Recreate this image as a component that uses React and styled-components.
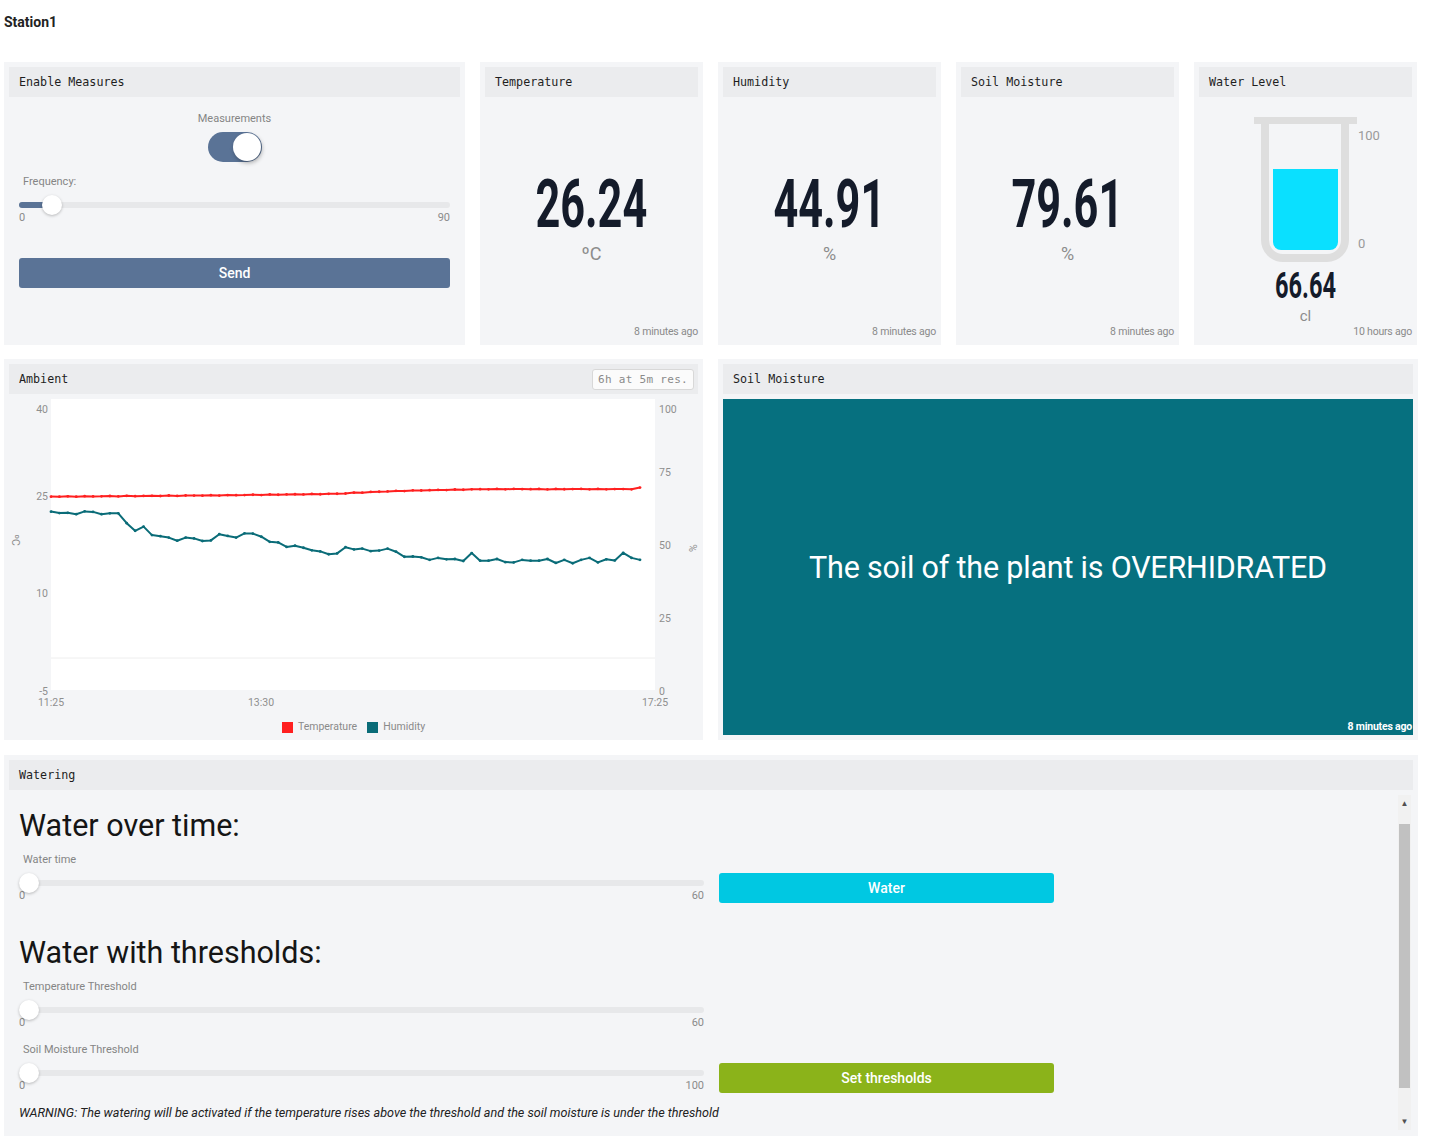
import React from "react";
import styled, { createGlobalStyle } from "styled-components";

const mono = `"DejaVu Sans Mono", "Liberation Mono", monospace`;

const GlobalStyle = createGlobalStyle`
  body {
    margin: 0;
    background: #fff;
    font-family: Roboto, "Noto Sans", sans-serif;
    color: #1c1c1c;
  }
`;

const Page = styled.div`
  width: 1414px;
  padding: 0 11px 0 4px;
`;

const Title = styled.div`
  padding-top: 14px;
  height: 16px;
  line-height: 16px;
  font-size: 14px;
  font-weight: 700;
  color: #222;
  margin-bottom: 32px;
`;

const Row = styled.div`
  display: grid;
  grid-template-columns: ${(p) => p.$cols};
  gap: 15px;
  height: ${(p) => p.$height}px;
  margin-bottom: 15px;
`;

const Card = styled.div`
  background: #f4f5f7;
  padding: 5px;
  display: flex;
  flex-direction: column;
  box-sizing: border-box;
  min-width: 0;
`;

const CardHeader = styled.div`
  height: 30px;
  flex-shrink: 0;
  background: #ebecee;
  padding: 0 4px 0 10px;
  display: flex;
  align-items: center;
  justify-content: space-between;
  font-family: ${mono};
  font-size: 11.7px;
  color: #1e1e1e;
`;

const ResButton = styled.div`
  height: 19px;
  line-height: 19px;
  padding: 0 5px;
  border: 1px solid #d8d8d8;
  border-radius: 3px;
  background: #fbfbfb;
  font-family: ${mono};
  font-size: 11px;
  color: #8a8a8a;
  letter-spacing: 0.3px;
`;

const Body = styled.div`
  flex: 1;
  display: flex;
  flex-direction: column;
  position: relative;
  min-height: 0;
`;

/* ---------- enable measures ---------- */

const ControlBody = styled(Body)`
  padding: 0 10px;
`;

const SmallLabel = styled.div`
  font-size: 11px;
  line-height: 14px;
  color: #858585;
  margin-top: ${(p) => p.$top || 0}px;
  padding-left: ${(p) => (p.$center ? 0 : 4)}px;
  text-align: ${(p) => (p.$center ? "center" : "left")};
`;

const Toggle = styled.div`
  align-self: center;
  width: 54px;
  height: 30px;
  margin-top: 6px;
  border-radius: 15px;
  background: #5a7396;
  position: relative;
`;

const ToggleThumb = styled.div`
  position: absolute;
  right: 1px;
  top: 1px;
  width: 28px;
  height: 28px;
  border-radius: 50%;
  background: #fff;
  box-shadow: 1px 2px 4px rgba(0, 0, 0, 0.3);
`;

const SliderWrap = styled.div`
  height: 12px;
  margin-top: ${(p) => p.$top}px;
  position: relative;
  display: flex;
  align-items: center;
`;

const SliderTrack = styled.div`
  width: 100%;
  height: 6px;
  border-radius: 3px;
  background: #e7e8ea;
  position: relative;
  overflow: hidden;
`;

const SliderFill = styled.div`
  position: absolute;
  left: 0;
  top: 0;
  bottom: 0;
  background: #5a7396;
`;

const SliderThumb = styled.div`
  position: absolute;
  top: -4px;
  width: 20px;
  height: 20px;
  border-radius: 50%;
  background: #fff;
  box-shadow: 0 1px 3px rgba(0, 0, 0, 0.25);
`;

const Ticks = styled.div`
  display: flex;
  justify-content: space-between;
  font-size: 11px;
  line-height: 14px;
  color: #8b8b8b;
`;

const ActionButton = styled.div`
  height: 30px;
  line-height: 30px;
  border-radius: 3px;
  background: ${(p) => p.$bg};
  color: #fff;
  text-align: center;
  font-size: 14px;
  font-weight: 500;
  margin-top: ${(p) => p.$top || 0}px;
`;

const Slider = ({ top, left = 0, fill }) => (
  <SliderWrap $top={top}>
    <SliderTrack>{fill ? <SliderFill style={{ width: fill }} /> : null}</SliderTrack>
    <SliderThumb style={{ left }} />
  </SliderWrap>
);

/* ---------- value cards ---------- */

const BigNumber = styled.div`
  font-family: Roboto, sans-serif;
  font-weight: 700;
  font-size: ${(p) => p.$size}px;
  line-height: ${(p) => p.$size}px;
  color: #141b2a;
  margin-top: ${(p) => p.$top}px;
  transform: scaleX(0.655);
  transform-origin: center;
`;

const Unit = styled.div`
  font-size: ${(p) => p.$size}px;
  line-height: ${(p) => p.$size + 2}px;
  color: #8c8c8c;
  margin-top: ${(p) => p.$top}px;
`;

const ValueBody = styled(Body)`
  align-items: center;
`;

const Footer = styled.div`
  margin-top: auto;
  margin-bottom: 1px;
  align-self: flex-end;
  font-size: 10.5px;
  line-height: 14px;
  letter-spacing: -0.2px;
  color: #8a8a8a;
`;

const Tube = styled.svg`
  margin-top: 17px;
  overflow: visible;
`;

/* ---------- chart ---------- */

const ChartSvg = styled.svg`
  margin-top: 2px;
  overflow: visible;
`;

const Legend = styled.div`
  display: flex;
  justify-content: center;
  gap: 10px;
  margin-top: 8px;
  font-size: 10.5px;
  line-height: 14px;
  color: #8a8a8a;
`;

const LegendItem = styled.div`
  display: flex;
  align-items: center;
  gap: 5px;
`;

const Swatch = styled.span`
  width: 11px;
  height: 11px;
  background: ${(p) => p.$color};
`;

/* ---------- soil message ---------- */

const Alert = styled.div`
  flex: 1;
  margin-top: 5px;
  background: #06707f;
  display: flex;
  align-items: center;
  justify-content: center;
  position: relative;
`;

const AlertText = styled.div`
  font-size: 30.5px;
  color: #fff;
  letter-spacing: -0.2px;
`;

const AlertAgo = styled.div`
  position: absolute;
  right: 1px;
  bottom: 1px;
  font-size: 10.5px;
  line-height: 14px;
  font-weight: 700;
  color: #fff;
  letter-spacing: -0.2px;
`;

/* ---------- watering ---------- */

const WaterBody = styled(Body)`
  flex-direction: row;
  padding-top: 5px;
`;

const WaterContent = styled.div`
  flex: 1;
  padding-left: 10px;
  padding-top: 13px;
`;

const Heading = styled.div`
  font-size: 30.5px;
  line-height: 36px;
  color: #151515;
  margin-top: ${(p) => p.$top}px;
`;

const SliderRow = styled.div`
  display: grid;
  grid-template-columns: 685px 335px;
  gap: 15px;
  align-items: end;
`;

const SliderBlock = styled.div`
  display: flex;
  flex-direction: column;
`;

const Warning = styled.div`
  margin-top: 12px;
  font-size: 12.6px;
  line-height: 16px;
  font-style: italic;
  color: #222;
`;

const Scrollbar = styled.div`
  width: 13px;
  margin-right: 2px;
  margin-bottom: 1px;
  background: #f1f1f1;
  display: flex;
  flex-direction: column;
  align-items: center;
`;

const Arrow = styled.div`
  height: 17px;
  display: flex;
  align-items: center;
  justify-content: center;
  font-size: 8px;
  color: #505050;
  margin-top: ${(p) => (p.$bottom ? "auto" : "0")};
`;

const ScrollThumb = styled.div`
  width: 11px;
  margin: 12px 0 0;
  height: 264px;
  background: #c1c1c1;
`;

/* ---------- data ---------- */

const humidity = [
  63.6, 63.1, 63.2, 62.7, 63.7, 63.5, 62.7, 63.0, 63.0, 59.5, 56.8, 58.3, 55.3,
  54.9, 54.4, 53.3, 54.4, 54.1, 53.2, 53.4, 55.6, 55.0, 54.4, 55.9, 55.8, 54.7,
  52.9, 52.7, 51.1, 51.5, 50.8, 49.9, 49.5, 48.5, 48.8, 51.0, 50.2, 50.5, 49.6,
  49.8, 50.5, 49.4, 47.6, 47.7, 47.4, 46.5, 47.2, 46.7, 46.8, 46.1, 48.9, 46.2,
  46.2, 46.8, 45.7, 45.6, 46.5, 46.2, 46.2, 46.8, 45.4, 46.5, 45.3, 46.5, 47.2,
  45.6, 46.7, 46.3, 49.0, 47.2, 46.5,
];

const tempAnchors = [
  [0, 26.0], [20, 26.2], [34, 26.45], [36, 26.6], [40, 26.85], [44, 27.0],
  [52, 27.2], [69, 27.2], [70, 27.4],
];

const temperature = humidity.map((_, i) => {
  let k = 0;
  while (k < tempAnchors.length - 2 && tempAnchors[k + 1][0] < i) k++;
  const [x0, y0] = tempAnchors[k];
  const [x1, y1] = tempAnchors[k + 1];
  const t = Math.min(1, Math.max(0, (i - x0) / (x1 - x0)));
  return y0 + (y1 - y0) * t + Math.sin(i * 3.7) * 0.04;
});

const px = (i) => 42 + (i * 589) / (humidity.length - 1);
const humY = (v) => 295 - v * 2.82;
const tempY = (v) => 295 - (v + 5) * 6.27;

const Series = ({ values, toY, color }) => {
  const pts = values.map((v, i) => `${px(i).toFixed(1)},${toY(v).toFixed(1)}`);
  return (
    <g>
      <polyline points={pts.join(" ")} fill="none" stroke={color} strokeWidth="2" strokeLinejoin="round" />
      {values.map((v, i) => (
        <circle key={i} cx={px(i)} cy={toY(v)} r="1.4" fill={color} />
      ))}
    </g>
  );
};

const axisText = { fontFamily: "Roboto, sans-serif", fontSize: 10.5, fill: "#8f8f8f" };

const AmbientChart = () => (
  <ChartSvg width="689" height="316">
    <rect x="42" y="3" width="604" height="291" fill="#fff" />
    <line x1="42" x2="646" y1="262" y2="262" stroke="#eeeeee" />
    {[["40", 17], ["25", 104], ["10", 201], ["-5", 299]].map(([t, y]) => (
      <text key={t} x="39" y={y} textAnchor="end" style={axisText}>{t}</text>
    ))}
    {[["100", 17], ["75", 80], ["50", 153], ["25", 226], ["0", 299]].map(([t, y]) => (
      <text key={t} x="650" y={y} style={axisText}>{t}</text>
    ))}
    {[["11:25", 42], ["13:30", 252], ["17:25", 646]].map(([t, x]) => (
      <text key={t} x={x} y="310" textAnchor="middle" style={axisText}>{t}</text>
    ))}
    <text transform="translate(3 144) rotate(90)" textAnchor="middle" style={axisText}>ºC</text>
    <text transform="translate(680 152) rotate(90)" textAnchor="middle" style={axisText}>%</text>
    <Series values={temperature} toY={tempY} color="#ff2020" />
    <Series values={humidity} toY={humY} color="#0a6c78" />
  </ChartSvg>
);

const ValueCard = ({ title, value, unit, ago }) => (
  <Card>
    <CardHeader>{title}</CardHeader>
    <ValueBody>
      <BigNumber $size={66} $top={75}>{value}</BigNumber>
      <Unit $size={18} $top={6}>{unit}</Unit>
      <Footer>{ago}</Footer>
    </ValueBody>
  </Card>
);

const gaugeText = { fontFamily: "Roboto, sans-serif", fontSize: 13, fill: "#9a9a9a" };

export default function App() {
  return (
    <>
      <GlobalStyle />
      <Page>
        <Title>Station1</Title>

        <Row $cols="461px repeat(4, 223px)" $height={282}>
          <Card>
            <CardHeader>Enable Measures</CardHeader>
            <ControlBody>
              <SmallLabel $center $top={15}>Measurements</SmallLabel>
              <Toggle>
                <ToggleThumb />
              </Toggle>
              <SmallLabel $top={13}>Frequency:</SmallLabel>
              <Slider top={10} left={23} fill={26} />
              <Ticks>
                <span>0</span>
                <span>90</span>
              </Ticks>
              <ActionButton $bg="#5a7396" $top={33}>Send</ActionButton>
            </ControlBody>
          </Card>

          <ValueCard title="Temperature" value="26.24" unit="ºC" ago="8 minutes ago" />
          <ValueCard title="Humidity" value="44.91" unit="%" ago="8 minutes ago" />
          <ValueCard title="Soil Moisture" value="79.61" unit="%" ago="8 minutes ago" />

          <Card>
            <CardHeader>Water Level</CardHeader>
            <ValueBody>
              <Tube width="104" height="150">
                <rect x="0" y="3" width="103" height="7" fill="#dedede" />
                <path d="M11 10 V126 a18 18 0 0 0 18 18 H73 a18 18 0 0 0 18 -18 V10" fill="none" stroke="#dedede" strokeWidth="8" />
                <path d="M19 55 H84 V128 a8 8 0 0 1 -8 8 H27 a8 8 0 0 1 -8 -8 Z" fill="#0ae0ff" />
                <text x="104" y="26" style={gaugeText}>100</text>
                <text x="104" y="134" style={gaugeText}>0</text>
              </Tube>
              <BigNumber $size={36} $top={4}>66.64</BigNumber>
              <Unit $size={15} $top={4}>cl</Unit>
              <Footer>10 hours ago</Footer>
            </ValueBody>
          </Card>
        </Row>

        <Row $cols="699px 700px" $height={381}>
          <Card>
            <CardHeader>
              Ambient
              <ResButton>6h at 5m res.</ResButton>
            </CardHeader>
            <Body>
              <AmbientChart />
              <Legend>
                <LegendItem>
                  <Swatch $color="#ff2020" />
                  Temperature
                </LegendItem>
                <LegendItem>
                  <Swatch $color="#0a6c78" />
                  Humidity
                </LegendItem>
              </Legend>
            </Body>
          </Card>

          <Card>
            <CardHeader>Soil Moisture</CardHeader>
            <Alert>
              <AlertText>The soil of the plant is OVERHIDRATED</AlertText>
              <AlertAgo>8 minutes ago</AlertAgo>
            </Alert>
          </Card>
        </Row>

        <Row $cols="1fr" $height={381}>
          <Card>
            <CardHeader>Watering</CardHeader>
            <WaterBody>
              <WaterContent>
                <Heading $top={0}>Water over time:</Heading>
                <SliderRow>
                  <SliderBlock>
                    <SmallLabel $top={9}>Water time</SmallLabel>
                    <Slider top={10} />
                    <Ticks>
                      <span>0</span>
                      <span>60</span>
                    </Ticks>
                  </SliderBlock>
                  <ActionButton $bg="#00c8e2">Water</ActionButton>
                </SliderRow>

                <Heading $top={32}>Water with thresholds:</Heading>
                <SliderRow>
                  <SliderBlock>
                    <SmallLabel $top={9}>Temperature Threshold</SmallLabel>
                    <Slider top={10} />
                    <Ticks>
                      <span>0</span>
                      <span>60</span>
                    </Ticks>
                  </SliderBlock>
                </SliderRow>
                <SliderRow>
                  <SliderBlock>
                    <SmallLabel $top={13}>Soil Moisture Threshold</SmallLabel>
                    <Slider top={10} />
                    <Ticks>
                      <span>0</span>
                      <span>100</span>
                    </Ticks>
                  </SliderBlock>
                  <ActionButton $bg="#8bb31a">Set thresholds</ActionButton>
                </SliderRow>
                <Warning>
                  WARNING: The watering will be activated if the temperature rises above the threshold and the soil moisture is under the threshold
                </Warning>
              </WaterContent>
              <Scrollbar>
                <Arrow>▲</Arrow>
                <ScrollThumb />
                <Arrow $bottom>▼</Arrow>
              </Scrollbar>
            </WaterBody>
          </Card>
        </Row>
      </Page>
    </>
  );
}
